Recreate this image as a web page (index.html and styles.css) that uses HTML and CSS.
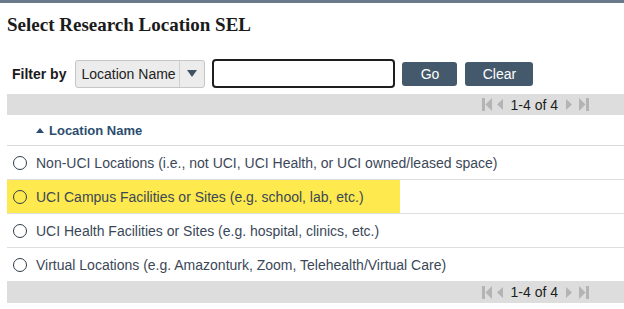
FILE: index.html
```html
<!DOCTYPE html>
<html lang="en">

<head>
    <meta charset="UTF-8">
    <meta name="viewport" content="width=device-width, initial-scale=1.0">
    <title>Select Research Location SEL</title>
    <link rel="stylesheet" href="styles.css">
</head>

<body>
    <div class="topbar"></div>
    <div class="page">
        <h1 class="title">Select Research Location SEL</h1>

        <div class="filter">
            <span class="filter-label">Filter by</span>
            <div class="select">
                <span class="select-text">Location Name</span>
                <span class="select-caret">
                    <svg width="10" height="7" viewBox="0 0 10 7"><path d="M0 0 L10 0 L5 7 Z" fill="#3e5266"/></svg>
                </span>
            </div>
            <input class="search" type="text">
            <button class="btn btn-go">Go</button>
            <button class="btn btn-clear">Clear</button>
        </div>

        <div class="pager">
            <svg class="pg-icon" width="10" height="13" viewBox="0 0 10 13"><rect x="0" y="0" width="3" height="13" fill="#b4b4b4"/><path d="M10 0 L10 13 L3.5 6.5 Z" fill="#b4b4b4"/></svg>
            <svg class="pg-icon pg-prev" width="6" height="11" viewBox="0 0 6 11"><path d="M6 0 L6 11 L0 5.5 Z" fill="#b4b4b4"/></svg>
            <span class="pg-text">1-4 of 4</span>
            <svg class="pg-icon pg-next" width="6" height="11" viewBox="0 0 6 11"><path d="M0 0 L0 11 L6 5.5 Z" fill="#b4b4b4"/></svg>
            <svg class="pg-icon" width="10" height="13" viewBox="0 0 10 13"><path d="M0 0 L0 13 L6.5 6.5 Z" fill="#b4b4b4"/><rect x="7" y="0" width="3" height="13" fill="#b4b4b4"/></svg>
        </div>

        <div class="colhead">
            <svg width="8" height="5" viewBox="0 0 8 5"><path d="M0 5 L8 5 L4 0 Z" fill="#2b4d70"/></svg>
            <span>Location Name</span>
        </div>

        <div class="row">
            <span class="radio"></span>
            <span class="row-text">Non-UCI Locations (i.e., not UCI, UCI Health, or UCI owned/leased space)</span>
        </div>
        <div class="row marked">
            <span class="radio"></span>
            <span class="row-text">UCI Campus Facilities or Sites (e.g. school, lab, etc.)</span>
        </div>
        <div class="row">
            <span class="radio"></span>
            <span class="row-text">UCI Health Facilities or Sites (e.g. hospital, clinics, etc.)</span>
        </div>
        <div class="row last">
            <span class="radio"></span>
            <span class="row-text">Virtual Locations (e.g. Amazonturk, Zoom, Telehealth/Virtual Care)</span>
        </div>

        <div class="pager pager-bottom">
            <svg class="pg-icon" width="10" height="13" viewBox="0 0 10 13"><rect x="0" y="0" width="3" height="13" fill="#b4b4b4"/><path d="M10 0 L10 13 L3.5 6.5 Z" fill="#b4b4b4"/></svg>
            <svg class="pg-icon pg-prev" width="6" height="11" viewBox="0 0 6 11"><path d="M6 0 L6 11 L0 5.5 Z" fill="#b4b4b4"/></svg>
            <span class="pg-text">1-4 of 4</span>
            <svg class="pg-icon pg-next" width="6" height="11" viewBox="0 0 6 11"><path d="M0 0 L0 11 L6 5.5 Z" fill="#b4b4b4"/></svg>
            <svg class="pg-icon" width="10" height="13" viewBox="0 0 10 13"><path d="M0 0 L0 13 L6.5 6.5 Z" fill="#b4b4b4"/><rect x="7" y="0" width="3" height="13" fill="#b4b4b4"/></svg>
        </div>
    </div>
</body>

</html>
```

FILE: styles.css
```css
body {
    margin: 0;
    font-family: "Liberation Sans", Arial, sans-serif;
    background-color: #fff;
}

.topbar {
    height: 3px;
    background-color: #6b7a8b;
}

.page {
    padding-left: 7px;
}

.title {
    margin: 10px 0 0 0;
    font-family: "Liberation Serif", serif;
    font-size: 19px;
    line-height: 24px;
    font-weight: bold;
    color: #1b1b1b;
}

/* filter row */
.filter {
    display: flex;
    align-items: center;
    height: 29px;
    margin-top: 22px;
    padding-left: 5px;
}

.filter-label {
    font-size: 14px;
    font-weight: bold;
    color: #1b1b1b;
    margin-right: 9px;
}

.select {
    display: flex;
    box-sizing: border-box;
    width: 130px;
    height: 28px;
    border: 1px solid #c6c6c6;
    border-radius: 3px;
    background-color: #ececec;
    margin-right: 7px;
}

.select-text {
    flex: 1;
    font-size: 14px;
    line-height: 26px;
    padding-left: 5px;
    color: #222;
}

.select-caret {
    width: 24px;
    border-left: 1px solid #cfcfcf;
    display: flex;
    align-items: center;
    justify-content: center;
}

.search {
    box-sizing: border-box;
    width: 183px;
    height: 29px;
    border: 2px solid #1e1e1e;
    border-radius: 4px;
    margin: 0 7px 0 0;
    padding: 0;
}

.btn {
    box-sizing: border-box;
    height: 24px;
    border: 0;
    border-radius: 3px;
    background-color: #44596b;
    color: #fff;
    font-family: "Liberation Sans", Arial, sans-serif;
    font-size: 14px;
    padding: 0;
}

.btn-go {
    width: 55px;
    margin-right: 8px;
}

.btn-clear {
    width: 68px;
}

/* pager bars */
.pager {
    display: flex;
    align-items: center;
    justify-content: flex-end;
    height: 21px;
    margin-top: 6px;
    padding-right: 35px;
    background-color: #dddddd;
}

.pager-bottom {
    margin-top: 0;
    height: 22px;
}

.pg-icon {
    display: block;
}

.pg-prev {
    margin-left: 5px;
    margin-right: 8px;
}

.pg-next {
    margin-left: 8px;
    margin-right: 7px;
}

.pg-text {
    font-size: 14px;
    color: #1e1e1e;
}

/* table */
.colhead {
    display: flex;
    align-items: center;
    height: 30px;
    padding-left: 29px;
    border-bottom: 1px solid #d9d9d9;
    color: #2b4d70;
    font-size: 13px;
    font-weight: bold;
}

.colhead svg {
    margin-right: 5px;
}

.row {
    display: flex;
    align-items: center;
    height: 33px;
    border-bottom: 1px solid #dedede;
    padding-left: 6px;
}

.row.last {
    border-bottom: 0;
}

.row.marked {
    background: linear-gradient(to right, #fee94e 393px, transparent 393px);
}

.radio {
    box-sizing: border-box;
    width: 14px;
    height: 14px;
    border: 1.5px solid #2e3d4c;
    border-radius: 50%;
    margin-right: 9px;
}

.row-text {
    font-size: 14px;
    color: #3b4858;
}
```
